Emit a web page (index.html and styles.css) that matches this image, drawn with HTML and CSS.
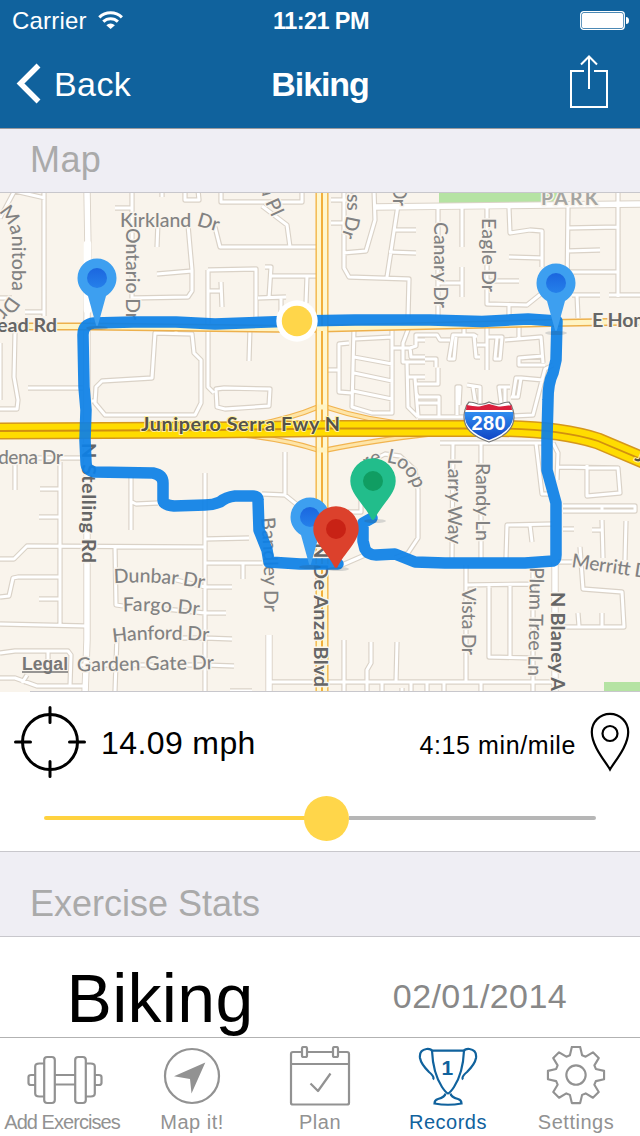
FILE: index.html
```html
<!DOCTYPE html>
<html lang="en">
<head>
<meta charset="utf-8">
<title>Biking</title>
<link rel="stylesheet" href="styles.css">
</head>
<body>
<div class="screen">
  <header class="top">
    <div class="status">
      <div class="carrier"><span>Carrier</span>
        <svg width="26" height="19" viewBox="98 11 26 19"><g fill="none" stroke="#fff" stroke-width="3.1"><path d="M99.300 17.300a16.500 16.500 0 0 1 22.600 0"/><path d="M103.300 21.700a10.600 10.600 0 0 1 14.600 0"/></g><path d="M106.300 25.200a6.500 6.500 0 0 1 8.600 0l-4.300 3.900z" fill="#fff"/></svg>
      </div>
      <div class="clock">11:21 PM</div>
      <svg class="battery" width="50" height="19" viewBox="0 0 50 19"><rect x=".7" y=".7" width="43.600" height="17.600" rx="3" fill="none" stroke="#fff" stroke-width="1.300"/><rect x="2" y="2" width="41" height="15" rx="1.500" fill="#fff"/><path d="M46 6a3 3.500 0 0 1 0 7z" fill="#fff"/></svg>
    </div>
    <nav class="nav">
      <div class="back"><svg width="26" height="42" viewBox="16 64 26 42"><path d="M38.500 66.500l-18 18 18 18" fill="none" stroke="#fff" stroke-width="5.500"/></svg><span>Back</span></div>
      <h1>Biking</h1>
      <svg class="share" width="40" height="54" viewBox="569 55 40 54"><path d="M584 71h-13v36h36V71h-13M589 89V57M581 64.500l8-8 8 8" fill="none" stroke="#fff" stroke-width="2"/></svg>
    </nav>
  </header>

  <h2 class="section section-map">Map</h2>

  <svg class="map" width="640" height="499" viewBox="0 193 640 499">
    <defs>
      <linearGradient id="dot" x1="0" y1="0" x2="0" y2="1"><stop offset="0" stop-color="#1b66df"/><stop offset="1" stop-color="#2580ea"/></linearGradient>
      <linearGradient id="shield" x1="0" y1="0" x2="0" y2="1"><stop offset="0" stop-color="#2f8df0"/><stop offset="1" stop-color="#1044c4"/></linearGradient>
      <g id="bluepin"><ellipse cx="0" cy="50" rx="11" ry="2" fill="#345" opacity=".18"/><path d="M-19.500 0a19.500 19.500 0 1 1 39 0C19.500 8 15 14 9 18L1 47q-1 2-2 0L-9 18C-15 14-19.500 8-19.500 0z" fill="#3d9ff0"/><circle r="10" fill="url(#dot)"/></g>
      <path id="drop" d="M-22.700 0a22.700 22.700 0 1 1 45.400 0C22.700 13 9 23 1.500 38q-1.500 2-3 0C-9 23-22.700 13-22.700 0z"/>
      <path id="streets" d="M44 190V316M10 190L45 198M15 190L0 218M25 312H44M0 298H12M132 190V300M115 208H132M162 190V197M185 190V200H199L198 190M158 222L157 247M188 225L192 270V291L188 297L133 298M157 274L192 271
      M317 247H220L215 227M208 270L256 269V317M208 270V387L214 393M208 291H215M155 333L192 334 194 353 201 360 201 403 195 415H105L95 403 96 387 102 381 152 378ZM176 325V333M92 401H95M28 388H83M15 333L14 377 18 400 17 409H0M0 343V400
      M221 190V202H302V190M262 206L287 225 290 247M265 267H271L269 298M271 276H317M258 298L286 297M281 297V312M307 276L306 303M221 282L222 307M215 291H221M250 328L249 361M216 389L224 388 270 389 269 406 225 409 217 407Z
      M331 200H350M331 223H344M344 190V268L349 277 409 279 408 317M343 253L366 251 375 220 374 190M398 205L387 277M395 230H416M389 252L416 253
      M354 328L352 407 372 413H392V330M354 339L392 337M354 357L392 364M354 373L392 381M353 391L392 399M349 343L339 344V392L352 393M328 370H339M409 327L403 343V362L407 362 408 407 418 417M392 348H410L416 346V335H425M410 347L411 357H425M407 362H425M407 377H425M415 378L418 416M416 384H438V368M416 393L418 397H439V416M416 403H438M418 417H465M416 340H425
      M438 208V317M462 208V247M462 267V297M438 283H462M487 208V304L527 305 542 293M509 305V316M509 208L510 233 530 230 542 231V267M509 257L542 258M487 281H519M568 207L567 293M568 228L618 227M567 251L600 250M567 272H618M618 190V297M572 295H600M609 295H640M577 295L578 318
      M464 325V335M425 335H437L440 340H450M468 335H453L449 359H454L456 337M474 335L476 357H480M487 327V370M468 335H474L477 337M477 345H487M488 337H502L500 359H495L497 338M505 340L541 337 543 363M519 327V338M545 365H519V358L543 356M553 365L545 369 533 415 512 416M543 380L521 378 518 397H511M521 378H516L513 397M457 415V387H460L459 405M467 385L480 387V403M473 387L475 400M510 387H499L501 403M505 388V402M425 359H436V367
      M30 458H80M15 460V490M60 462V626M40 489H61M39 517H61M0 559H14L27 546 205 547M0 597L9 596 13 578 18 577H61M39 599H61M0 624L87 626M0 653L15 651H68L71 655 70 686M48 651V665M0 678H15L37 686H87M27 675L22 683M131 477V530M132 502L136 504 158 503M115 547L116 605 123 606M205 473V691M117 635L115 691M205 539L249 538M205 563H263M205 587H232M205 613H226M205 638L232 639M205 665L234 666M160 576L205 587M165 609L205 613M180 638H205M77 665H205
      M285 452V495M262 494L285 495 300 507M243 563V579M269 682H560M344 640V691M371 642V663L367 670V691M397 642L396 682M342 565L365 555M373 460L385 454 400 456 415 470 418 490V538L408 553 395 558M361 500V512H348M382 682V691M411 682V691M427 682V691M402 688V691M230 691H252
      M440 443H542M453 443L452 558M481 443V558M536 443L542 494H549M553 443L558 453 557 480M558 467L618 468 620 493 587 496V465M563 506H635V511H563M602 506V511M563 529H574M506 558L507 525 552 524M530 525L532 542M592 530H603M602 520L603 558M626 521L625 560M558 562H575M580 547L583 589 622 592 624 627 558 627M578 613L579 626M602 613V626M533 567V691M466 565V682M466 585L532 584M489 586V657L532 658M510 586V657M444 682V691M481 682V691"/>
      <path id="avenues" d="M87 190L88 250 87 322 87 470V640L85 694M374 207L640 204M555 562V694M269 635V694"/>
      <path id="ramps" d="M245 427Q290 419 318 407M326 407Q370 422 420 425M235 434Q285 439 318 450M326 450Q370 441 430 434"/>
      <path id="fwy" d="M-5 431L215 430 330 428.500H500Q560 429 598 441L650 463"/>
      <path id="p-man" d="M-2 212Q11 224 12 240V284Q13 296-6 315"/>
      <path id="p-kirk" d="M120 226.500H200L226 234"/>
      <path id="p-apl" d="M259 183L263 198 274 222"/>
      <path id="p-oss" d="M347 183V210Q346 226 339 242"/>
      <path id="p-dun" d="M114 583Q165 580 215 591"/>
      <path id="p-far" d="M123 611.500Q165 610 210 617"/>
      <path id="p-han" d="M113 642.500Q150 637 220 642"/>
      <path id="p-gar" d="M77 671.500L225 669"/>
      <path id="p-mer" d="M571 567L665 581"/>
      <path id="p-loop" d="M367 469Q381 459 394 464 412 473 417 500"/>
      <path id="p-ban" d="M261 518Q265 560 264 620"/>
    </defs>
    <rect x="0" y="193" width="640" height="499" fill="#f9f4ec"/>
    <path d="M439 193H562L550 204H439zM604 682H640V692H604z" fill="#b5e3a3"/>
    <use href="#streets" class="case"/><use href="#avenues" class="case wide"/>
    <use href="#streets" class="road"/><use href="#avenues" class="road wide"/>
    <path d="M87.500 244V310" stroke="#fff" stroke-width="7.500" stroke-linecap="round"/>
    <g fill="none">
      <path d="M0 326.500H90L300 329 550 323 640 321.500" stroke="#edb04c" stroke-width="8"/>
      <path d="M0 326.500H90L300 329 550 323 640 321.500" stroke="#fff4c4" stroke-width="5"/>
      <use href="#ramps" stroke="#f1b450" stroke-width="5.500"/><use href="#ramps" stroke="#fee5a8" stroke-width="3"/>
      <path d="M322 190V694" stroke="#f2af3c" stroke-width="13"/>
      <path d="M318.900 190V694M325.100 190V694" stroke="#fff7cf" stroke-width="4.200"/>
      <path d="M317 328.500H327M317 407H327M317 450H327" stroke="#fff4c4" stroke-width="5"/>
      <use href="#fwy" stroke="#d5971c" stroke-width="17"/><use href="#fwy" stroke="#ffdc00" stroke-width="14"/><use href="#fwy" stroke="#d1900f" stroke-width="1.800"/>
    </g>
    <g class="labels">
      <text><textPath href="#p-man" textLength="110">Manitoba Dr</textPath></text>
      <text><textPath href="#p-kirk" textLength="98">Kirkland Dr</textPath></text>
      <text><textPath href="#p-apl" textLength="37">la Pl</textPath></text>
      <text><textPath href="#p-oss" textLength="54">oss Dr</textPath></text>
      <text transform="translate(393 185) rotate(90)" textLength="21">Dr</text>
      <text transform="translate(126 228) rotate(90)" textLength="92">Ontario Dr</text>
      <text transform="translate(433.500 222) rotate(90)" textLength="86">Canary Dr</text>
      <text transform="translate(482 218) rotate(90)" textLength="74">Eagle Dr</text>
      <text transform="translate(448 459) rotate(90)" textLength="85">Larry Way</text>
      <text transform="translate(476 463) rotate(90)" textLength="78">Randy Ln</text>
      <text transform="translate(462 588) rotate(90)" textLength="67">Vista Dr</text>
      <text transform="translate(530 567) rotate(91)" textLength="109">Plum Tree Ln</text>
      <text><textPath href="#p-ban" textLength="94">Bandley Dr</textPath></text>
      <text x="-2" y="463.500" textLength="65">dena Dr</text>
      <text><textPath href="#p-dun" textLength="90">Dunbar Dr</textPath></text>
      <text><textPath href="#p-far" textLength="76">Fargo Dr</textPath></text>
      <text><textPath href="#p-han" textLength="96">Hanford Dr</textPath></text>
      <text><textPath href="#p-gar" textLength="137">Garden Gate Dr</textPath></text>
      <text><textPath href="#p-mer" textLength="85">Merritt Dr</textPath></text>
      <text><textPath href="#p-loop" textLength="62">re Loop</textPath></text>
      <text x="541" y="204.500" textLength="57" class="park">PARK</text>
      <g class="major">
        <text x="-3" y="331.500" textLength="60">ead Rd</text>
        <text x="592" y="326.500" textLength="142">E Homestead Rd</text>
        <text transform="translate(82 443) rotate(90)" textLength="120">N Stelling Rd</text>
        <text transform="translate(314 543) rotate(90)" textLength="144">N De Anza Blvd</text>
        <text transform="translate(551 592) rotate(90)" textLength="99">N Blaney A</text>
        <text x="141" y="430.500" textLength="199" class="fwy">Junipero Serra Fwy N</text>
        <text transform="translate(634 460) rotate(22)" class="fwy">J</text>
      </g>
    </g>
    <path d="M489 402q5 3 11 2 5-2 9-2 3 3 4 8 6 22-24 32-30-10-24-32 1-5 4-8 4 0 9 2 6 1 11-2z" fill="#fff" stroke="#777" stroke-width="1.200"/>
    <path d="M466 410l.5-5q9 2 14 1.300l8.500-2.300 8.500 2.300q5 .7 14-1.300l.5 5z" fill="#d91f3c"/>
    <path d="M465 412h48q3 18-24 28-27-10-24-28z" fill="url(#shield)"/>
    <text x="471.500" y="429.500" textLength="34" class="shield">280</text>
    <path class="route" d="M338 564L300 564 269 562 267 550 259 530 258 500Q258 496 253 496H235Q226 497 220 502 213 505 205 505L174 506Q163 505 163 500L163 483Q163 475 153 473L95 472Q86 471 86 462L85 440 86 410 84 387 83 335Q83 324 94 323L133 322 176 322 215 324 297 321 355 320 430 320 482 321.500 528 319 557 321 556 360 553 373Q548 383 548 400L547 437 547 470 556 503 556 555Q556 560 553 561L525 563 445 563 415 562 395 554 376 555Q368 555 365 549L363 541 363 523 372 518"/>
    <circle cx="297" cy="321" r="20.700" fill="#fff"/><circle cx="297" cy="321" r="15.200" fill="#ffd64a"/>
    <use href="#bluepin" x="97" y="278"/><use href="#bluepin" x="556" y="283"/>
    <ellipse cx="375" cy="521" rx="11" ry="2" fill="#345" opacity=".18"/><use href="#drop" x="373" y="481" fill="#22bd8b"/><circle cx="373" cy="481" r="10" fill="#109d62"/>
    <use href="#bluepin" x="310" y="517"/>
    <ellipse cx="338" cy="569" rx="11" ry="2" fill="#345" opacity=".18"/><use href="#drop" x="336" y="529" fill="#dc412c"/><circle cx="336" cy="529" r="10" fill="#c82215"/>
    <text x="22" y="670" class="legal" textLength="46">Legal</text><path d="M22 672h46" stroke="#777" stroke-width="1.500"/>
    <path d="M30 691.500H640" stroke="#c8c7cc"/>
  </svg>

  <section class="controls">
    <div class="metrics">
      <div class="speed">
        <svg width="72" height="72" viewBox="-36 -36 72 72"><g fill="none" stroke="#000" stroke-width="3"><circle r="27.500"/><path stroke-linecap="round" d="M-34.500 0h15M19.500 0h15M0-34.500v15M0 19.500v15"/></g></svg>
        <span>14.09 mph</span>
      </div>
      <div class="pace">
        <span>4:15 min/mile</span>
        <svg width="40" height="60" viewBox="0 0 40 60"><g fill="none" stroke="#000" stroke-width="2.200"><path d="M20 57.500C15 49 1.800 34 1.800 20A18.200 18.200 0 0 1 38.200 20C38.200 34 25 49 20 57.500z"/><circle cx="20" cy="21.500" r="7.500"/></g></svg>
      </div>
    </div>
    <div class="slider"><i class="done"></i><i class="thumb"></i><i class="left"></i></div>
  </section>

  <h2 class="section section-stats">Exercise Stats</h2>
  <section class="stat"><div class="activity">Biking</div><div class="date">02/01/2014</div></section>

  <footer class="tabs">
    <div class="tab t-add"><svg width="78" height="60" viewBox="25.500 1046 78 60"><g class="ic"><rect x="43.700" y="1057" width="10.600" height="46" rx="3"/><rect x="74.700" y="1057" width="10.600" height="46" rx="3"/><path d="M43.700 1063.500h-5q-4 0-4 3v27q0 3 4 3h5M85.300 1063.500h5q4 0 4 3v27q0 3-4 3h-5M34.700 1075h-4q-2.700 0-2.700 2v6q0 2 2.700 2h4M94.300 1075h4q2.700 0 2.700 2v6q0 2-2.700 2h-4M54.300 1075h20.400M54.300 1084.500h20.400"/></g></svg><span>Add Exercises</span></div>
    <div class="tab"><svg width="60" height="60" viewBox="162 1046 60 60"><circle cx="192" cy="1076" r="27" class="ic"/><path d="M174 1076.300L205.300 1062.600 191.500 1093.500 190 1079z" fill="#929292"/></svg><span>Map it!</span></div>
    <div class="tab"><svg width="62" height="60" viewBox="289 1046 62 60"><g class="ic"><path d="M302 1052h-9q-2 0-2 2v49q0 1.500 2 1.500h54q2 0 2-1.500v-49q0-2-2-2h-9M307 1052h26M291 1064h58M310.500 1083.500l7.500 7.500 12.500-17.500"/><rect x="302" y="1047" width="5" height="10" rx="1.500"/><rect x="333" y="1047" width="5" height="10" rx="1.500"/></g></svg><span>Plan</span></div>
    <div class="tab on"><svg width="60" height="60" viewBox="418 1046 60 60"><g fill="none" stroke="#10629d" stroke-width="2.200"><path d="M432 1050.700H464Q463 1073 454 1087 450 1093 448 1093.500 446 1093 442 1087 433 1073 432 1050.700z"/><path d="M432.500 1051.500Q431 1048.500 426.500 1049 419 1050 420 1058 421 1064 429 1072 435 1077 433 1079.500M463.500 1051.500Q465 1048.500 469.500 1049 477 1050 476 1058 475 1064 467 1072 461 1077 463 1079.500"/><path d="M445.500 1093.500Q445 1097 438 1099 434.500 1100 434.500 1103.500 448 1106 461.500 1103.500 461.500 1100 458 1099 451 1097 450.500 1093.500"/></g><text x="441.500" y="1075" class="one">1</text></svg><span>Records</span></div>
    <div class="tab"><svg width="62" height="62" viewBox="-31 -30 62 62"><g class="ic"><path d="M-6.300-20.500L-4.300-29H4.300L6.300-20.500 10-19 17.500-23.500 23.500-17.500 19-10 20.500-6.300 29-4.300V4.300L20.500 6.300 19 10 23.500 17.500 17.500 23.500 10 19 6.300 20.500 4.300 29H-4.300L-6.300 20.500-10 19-17.500 23.500-23.500 17.500-19 10-20.500 6.300-29 4.300V-4.300L-20.500-6.300-19-10-23.500-17.500-17.500-23.500-10-19z"/><circle r="10"/></g></svg><span>Settings</span></div>
  </footer>
</div>
</body>
</html>
```
FILE: styles.css
```css
* { box-sizing: border-box; margin: 0; padding: 0; }
body { width: 640px; height: 1136px; overflow: hidden; background: #fff; font-family: "Liberation Sans", Arial, sans-serif; }
svg { display: block; flex: none; }
span, .clock, .activity, .date { white-space: nowrap; }
.screen { width: 640px; height: 1136px; display: flex; flex-direction: column; overflow: hidden; }

.top { height: 129px; flex: none; background: #10629d; color: #fff; border-bottom: 1px solid #9a9a9e; }
.status { height: 40px; padding: 1px 10px 0 12px; display: grid; grid-template-columns: 1fr auto 1fr; align-items: center; font-size: 24px; }
.carrier { display: flex; align-items: center; gap: 11px; letter-spacing: .2px; }
.clock { font-weight: bold; font-size: 23.500px; letter-spacing: -.6px; padding-top: 1px; }
.battery { justify-self: end; }
.nav { height: 88px; padding: 0 31px 0 16px; display: grid; grid-template-columns: 1fr auto 1fr; align-items: center; }
.back { display: flex; align-items: center; gap: 12px; font-size: 34px; letter-spacing: .4px; }
.nav h1 { font-size: 34px; letter-spacing: -1.100px; padding-left: 15px; }
.share { justify-self: end; margin-top: -5px; }

.section { flex: none; background: #efeef4; color: #aaa; font-size: 36px; font-weight: normal; padding-left: 30px; border-bottom: 1px solid #c8c7cc; }
.section-map { height: 64px; line-height: 62px; letter-spacing: .4px; }
.section-stats { height: 85px; line-height: 103px; }

.map { height: 499px; overflow: hidden; font-family: Lato, "Open Sans", sans-serif; }
.case, .road { fill: none; stroke-linejoin: round; }
.case { stroke: #dad2c7; stroke-width: 5.300; }
.case.wide { stroke-width: 7.300; }
.road { stroke: #fff; stroke-width: 3; }
.road.wide { stroke-width: 5.500; }
.labels { font-size: 19.500px; font-weight: 500; fill: #828282; stroke: #f9f4ec; stroke-width: 3; stroke-linejoin: round; paint-order: stroke; }
.major { font-weight: bold; fill: #666; font-size: 19.800px; }
.major .fwy { fill: #55524a; stroke: #fff0a0; stroke-width: 2; }
.park { fill: #a5a5a2; font-weight: bold; }
.shield { font: bold 20px "Liberation Sans", sans-serif; fill: #fff; }
.route { fill: none; stroke: #0d80e6; stroke-width: 11.500; stroke-linejoin: round; stroke-linecap: round; opacity: .93; }
.legal { font: bold 17.500px "Liberation Sans", sans-serif; fill: #777; stroke: #f9f4ec; stroke-width: 2; paint-order: stroke; }

.controls { height: 160px; flex: none; border-bottom: 1px solid #c8c7cc; }
.metrics { height: 99px; padding: 0 10px 0 13.500px; display: flex; justify-content: space-between; align-items: center; }
.speed, .pace { display: flex; align-items: center; }
.speed { gap: 15.500px; font-size: 32px; letter-spacing: .4px; }
.speed span { margin-top: 3px; }
.pace { gap: 14px; font-size: 25px; letter-spacing: .6px; }
.pace span { margin-top: 8px; }
.slider { height: 46px; margin: 4px 44px 0; display: flex; align-items: center; }
.slider i { height: 4px; }
.done { width: 261px; background: #ffd23f; border-radius: 2px 0 0 2px; }
.slider .thumb { width: 45px; height: 45px; border-radius: 50%; background: #ffd64a; margin-left: -1px; }
.left { flex: 1; background: #b6b6b6; border-radius: 0 2px 2px 0; }

.stat { height: 100px; flex: none; display: flex; justify-content: space-between; padding: 0 73px 0 66.500px; }
.activity { font-size: 68px; line-height: 122px; letter-spacing: .3px; }
.date { font-size: 34px; line-height: 119px; color: #888; letter-spacing: .4px; }

.tabs { height: 99px; flex: none; background: #fff; border-top: 1px solid #b2b2b2; display: grid; grid-template-columns: repeat(5, 128px); position: relative; }
.tab { display: flex; flex-direction: column; align-items: center; padding-top: 8px; font-size: 20px; color: #929292; letter-spacing: .5px; }
.tab svg { height: 60px; }
.tab span { line-height: 24px; margin-top: 4px; }
.t-add { letter-spacing: -.95px; padding-right: 4px; }
.t-add svg { margin-left: 5px; }
.ic { fill: none; stroke: #929292; stroke-width: 2.200; stroke-linejoin: round; }
.on { color: #10629d; }
.one { font: bold 21px "Liberation Sans", sans-serif; fill: #10629d; }
```
